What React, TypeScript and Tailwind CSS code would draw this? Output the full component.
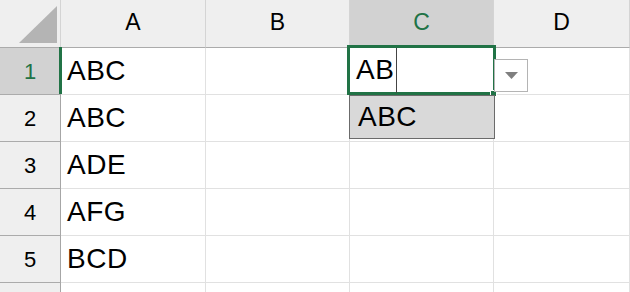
import React from "react";

const cols = ["A", "B", "C", "D"];
const widths = ["w-[145px]", "w-[144px]", "w-[144px]", "flex-1"];
const data: string[][] = [
  ["ABC", "", "", ""],
  ["ABC", "", "", ""],
  ["ADE", "", "", ""],
  ["AFG", "", "", ""],
  ["BCD", "", "", ""],
  ["", "", "", ""],
];

export default function App() {
  return (
    <div
      className="relative w-[630px] h-[292px] overflow-hidden bg-white"
      style={{ fontFamily: '"Liberation Sans", Arial, sans-serif' }}
    >
      {/* header row */}
      <div className="flex h-[48px]">
        <div className="relative w-[61px] shrink-0 bg-[#efefef] border-r border-b border-r-[#d4d4d4] border-b-[#ababab]">
          <svg className="absolute left-0 top-0" width="60" height="47" viewBox="0 0 60 47">
            <polygon points="57,6 57,43 19,43" fill="#b4b4b4" />
          </svg>
        </div>
        {cols.map((c, i) => (
          <div
            key={c}
            className={`${widths[i]} shrink-0 flex items-center justify-center pb-[2px] border-r border-b border-r-[#d4d4d4] border-b-[#ababab] text-[23px] ${
              c === "C" ? "bg-[#d2d2d2] text-[#217346]" : "bg-[#efefef] text-black"
            }`}
          >
            {c}
          </div>
        ))}
      </div>
      {data.map((row, r) => (
        <div key={r} className="flex h-[47px]">
          <div
            className={`w-[61px] shrink-0 flex items-center justify-center border-r border-b border-r-[#a6a6a6] border-b-[#ababab] text-[22px] ${
              r === 0 ? "bg-[#d2d2d2] text-[#217346]" : "bg-[#efefef] text-black"
            }`}
          >
            {r < 5 ? r + 1 : ""}
          </div>
          {row.map((v, i) => (
            <div
              key={i}
              className={`${widths[i]} shrink-0 flex items-center pl-[6px] border-r border-b border-[#e1e1e1] text-[28px] tracking-[0.5px] text-black`}
            >
              {v}
            </div>
          ))}
        </div>
      ))}

      {/* row 1 selected indicator */}
      <div className="absolute left-[59px] top-[47px] w-[3px] h-[47px] bg-[#217346]" />

      {/* active cell editor */}
      <div className="absolute left-[347px] top-[45px] w-[149px] h-[50px] border-[3px] border-[#217346] bg-white flex items-center pl-[6px] text-[28px] tracking-[0.5px] text-black">
        <span>AB</span>
        <span className="ml-[2px] w-px h-[45px] bg-[#444]" />
      </div>
      <div className="absolute left-[490px] top-[90px] w-[7px] h-[7px] bg-[#217346] border border-white" />

      {/* autocomplete list */}
      <div className="absolute left-[349px] top-[95px] w-[146px] h-[44px] bg-[#d9d9d9] border border-[#6b6b6b] flex items-center pl-[8px] text-[28px] tracking-[0.5px] text-black">
        ABC
      </div>

      {/* dropdown button */}
      <div className="absolute left-[494px] top-[59px] w-[34px] h-[33px] bg-white border border-[#b4b4b4] flex items-center justify-center">
        <svg width="13" height="7" viewBox="0 0 13 7">
          <polygon points="0,0 13,0 6.5,7" fill="#7f7f7f" />
        </svg>
      </div>
    </div>
  );
}
